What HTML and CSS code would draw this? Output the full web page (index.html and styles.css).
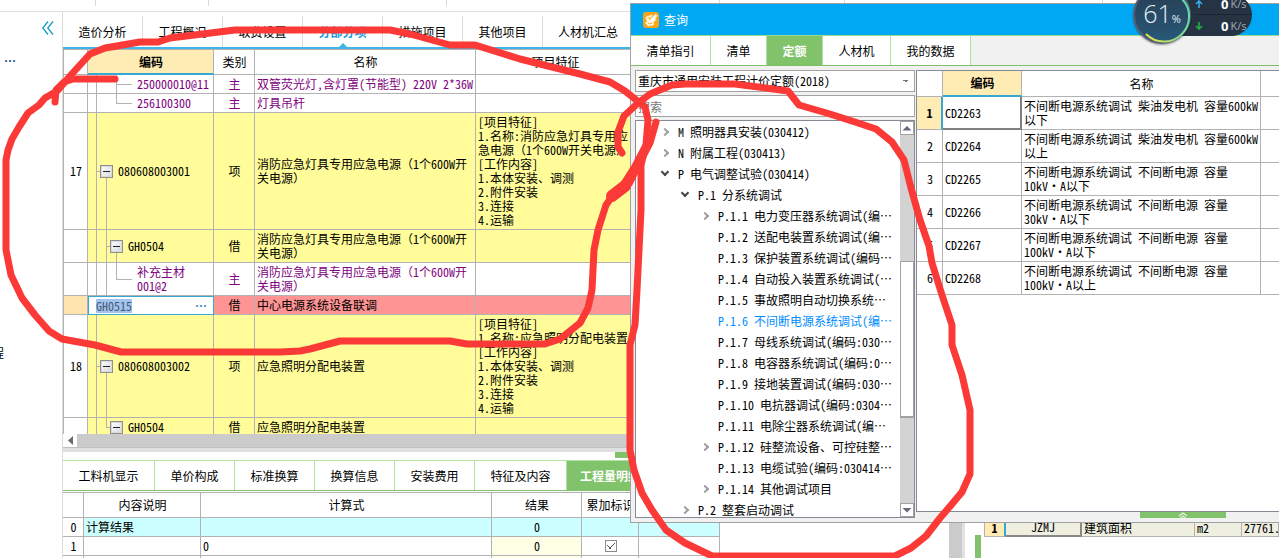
FILE: index.html
```html
<!DOCTYPE html>
<html lang="zh-CN">
<head>
<meta charset="utf-8">
<title>分部分项</title>
<link rel="stylesheet" href="styles.css">
</head>
<body>
<div class="app">
  <div class="ribbon"><i class="w1"></i><i class="w2"></i><i class="w3"></i><i class="w4"></i><i class="w5"></i><i class="w6"></i></div>
  <div class="body">
    <aside class="side">
      <button class="fold" aria-label="收起"><svg width="12" height="14" viewBox="0 0 12 14" fill="none" stroke="#189bc9" stroke-width="1.3"><path d="M6 .5 .8 7 6 13.500M11 .5 5.800 7 11 13.500"/></svg></button>
      <span class="side-more">、…</span>
      <span class="side-item">程</span>
    </aside>
    <main class="work">
      <nav class="tabs">
        <button>造价分析</button><button>工程概况</button><button>取费设置</button><button class="on">分部分项</button><button>措施项目</button><button>其他项目</button><button>人材机汇总</button>
      </nav>
      <div class="gridwrap">
        <table class="grid bill">
          <colgroup><col class="c1"><col class="c2"><col class="c3"><col class="c4"><col class="c5"></colgroup>
          <thead><tr><th></th><th class="pick">编码</th><th>类别</th><th>名称</th><th>项目特征</th></tr></thead>
          <tbody>
            <tr class="mat"><td></td><td class="t-mid"><div class="leaf">250000010@11</div></td><td class="c">主</td><td>双管荧光灯,含灯罩(节能型) 220V 2*36W</td><td></td></tr>
            <tr class="mat"><td></td><td class="t-end"><div class="leaf">256100300</div></td><td class="c">主</td><td>灯具吊杆</td><td></td></tr>
            <tr class="item"><td class="c">17</td><td class="t-root"><div class="node"><button class="tog" aria-label="折叠"></button>080608003001</div></td><td class="c">项</td><td>消防应急灯具专用应急电源（1个600W开<br>关电源）</td><td>[项目特征]<br>1.名称:消防应急灯具专用应<br>急电源（1个600W开关电源）<br>[工作内容]<br>1.本体安装、调测<br>2.附件安装<br>3.连接<br>4.运输</td></tr>
            <tr class="item"><td></td><td class="t-sub"><div class="node sub"><button class="tog" aria-label="折叠"></button>GH0504</div></td><td class="c">借</td><td>消防应急灯具专用应急电源（1个600W开<br>关电源）</td><td></td></tr>
            <tr class="mat"><td></td><td class="t-end2"><div class="leaf">补充主材<br>001@2</div></td><td class="c">主</td><td>消防应急灯具专用应急电源（1个600W开<br>关电源）</td><td></td></tr>
            <tr class="sel"><td></td><td class="edit"><div class="editor"><span class="mark">GH0515</span><button aria-label="更多">…</button></div></td><td class="c">借</td><td>中心电源系统设备联调</td><td></td></tr>
            <tr class="item"><td class="c">18</td><td class="t-root"><div class="node"><button class="tog" aria-label="折叠"></button>080608003002</div></td><td class="c">项</td><td>应急照明分配电装置</td><td>[项目特征]<br>1.名称:应急照明分配电装置<br>[工作内容]<br>1.本体安装、调测<br>2.附件安装<br>3.连接<br>4.运输</td></tr>
            <tr class="item"><td></td><td class="t-last"><div class="node sub"><button class="tog" aria-label="折叠"></button>GH0504</div></td><td class="c">借</td><td>应急照明分配电装置</td><td></td></tr>
          </tbody>
        </table>
      </div>
      <div class="hscroll"><button aria-label="向左"><svg width="12" height="13"><path d="M9 2v9L4 6.500z" fill="#666a73"/></svg></button></div>
      <div class="split"><i></i></div>
      <nav class="subtabs">
        <button class="wide">工料机显示</button><button>单价构成</button><button>标准换算</button><button>换算信息</button><button>安装费用</button><button class="wide">特征及内容</button><button class="on">工程量明细</button>
      </nav>
      <table class="grid calc">
        <colgroup><col class="d1"><col class="d2"><col class="d3"><col class="d4"><col class="d5"><col class="d6"></colgroup>
        <thead><tr><th></th><th>内容说明</th><th>计算式</th><th>结果</th><th>累加标识</th><th></th></tr></thead>
        <tbody>
          <tr class="sum"><td class="c">0</td><td>计算结果</td><td></td><td class="c">0</td><td></td><td></td></tr>
          <tr><td class="c">1</td><td></td><td>0</td><td class="c res">0</td><td class="c"><input type="checkbox" checked aria-label="累加标识"></td><td></td></tr>
          <tr><td></td><td></td><td></td><td class="res"></td><td></td><td></td></tr>
        </tbody>
      </table>
    </main>
    <div class="vbar"></div>
    <section class="right">
      <div class="grip"></div>
      <table class="vars"><colgroup><col class="v0"><col class="v1"><col class="v2"><col class="v3"><col></colgroup><tbody><tr><th>1</th><td class="code">JZMJ</td><td>建筑面积</td><td>m2</td><td>27761.</td></tr></tbody></table>
    </section>
  </div>
</div>

<section class="dialog" aria-label="查询">
  <header class="title">
    <svg width="16" height="16" viewBox="0 0 16 16"><rect width="16" height="16" rx="3" fill="#f9a51a"/><path d="M2.500 5 8 3l2 .5-4 4 1.500 2L12 6l1.500 1-3 3.500.5 2.500-6 1.500-3-4 2-1z" fill="#fff8e4"/><path d="m6.500 8.500 6-6.500 2 1.700-6 6-2.500.8z" fill="#fff"/><path d="m4.500 10.500 1.700 1.500 3.300-1M4.500 6.500l2.500-1" stroke="#f9a51a" fill="none"/></svg>
    <span>查询</span>
  </header>
  <nav class="dtabs"><button class="a">清单指引</button><button class="b">清单</button><button class="b on">定额</button><button class="d">人材机</button><button class="a">我的数据</button></nav>
  <div class="dbody">
    <div class="find">
      <select aria-label="定额库"><option>重庆市通用安装工程计价定额(2018)</option></select>
      <input type="text" placeholder="搜索" aria-label="搜索">
      <div class="treebox">
        <ul class="tree">
          <li class="l1 more">M 照明器具安装(030412)</li>
          <li class="l1 more">N 附属工程(030413)</li>
          <li class="l1 open">P 电气调整试验(030414)</li>
          <li class="l2 open">P.1 分系统调试</li>
          <li class="l3 more">P.1.1 电力变压器系统调试(编…</li>
          <li class="l3">P.1.2 送配电装置系统调试(编…</li>
          <li class="l3">P.1.3 保护装置系统调试(编码…</li>
          <li class="l3">P.1.4 自动投入装置系统调试(…</li>
          <li class="l3">P.1.5 事故照明自动切换系统…</li>
          <li class="l3 cur">P.1.6 不间断电源系统调试(编…</li>
          <li class="l3">P.1.7 母线系统调试(编码:030…</li>
          <li class="l3">P.1.8 电容器系统调试(编码:0…</li>
          <li class="l3">P.1.9 接地装置调试(编码:030…</li>
          <li class="l3">P.1.10 电抗器调试(编码:0304…</li>
          <li class="l3">P.1.11 电除尘器系统调试(编…</li>
          <li class="l3 more">P.1.12 硅整流设备、可控硅整…</li>
          <li class="l3">P.1.13 电缆试验(编码:030414…</li>
          <li class="l3 more">P.1.14 其他调试项目</li>
          <li class="l2 more">P.2 整套启动调试</li>
        </ul>
        <div class="vscroll">
          <button aria-label="向上"><svg width="12" height="12"><path d="M1.500 8.500h9L6 4z" fill="#666a7c"/></svg></button>
          <i class="gap1"></i><i class="thumb"></i><i class="gap2"></i>
          <button aria-label="向下"><svg width="12" height="12"><path d="M1.500 4h9L6 8.500z" fill="#666a7c"/></svg></button>
        </div>
      </div>
    </div>
    <div class="result">
      <div class="rbox">
        <table class="grid quota">
          <colgroup><col class="q1"><col class="q2"><col class="q3"><col></colgroup>
          <thead><tr><th></th><th class="pick">编码</th><th>名称</th><th></th></tr></thead>
          <tbody>
            <tr class="first"><td class="c">1</td><td>CD2263</td><td>不间断电源系统调试 柴油发电机 容量600kW<br>以下</td><td></td></tr>
            <tr><td class="c">2</td><td>CD2264</td><td>不间断电源系统调试 柴油发电机 容量600kW<br>以上</td><td></td></tr>
            <tr><td class="c">3</td><td>CD2265</td><td>不间断电源系统调试 不间断电源 容量<br>10kV·A以下</td><td></td></tr>
            <tr><td class="c">4</td><td>CD2266</td><td>不间断电源系统调试 不间断电源 容量<br>30kV·A以下</td><td></td></tr>
            <tr><td class="c">5</td><td>CD2267</td><td>不间断电源系统调试 不间断电源 容量<br>100kV·A以下</td><td></td></tr>
            <tr><td class="c">6</td><td>CD2268</td><td>不间断电源系统调试 不间断电源 容量<br>100kV·A以上</td><td></td></tr>
          </tbody>
        </table>
      </div>
      <button class="pull" aria-label="展开"><svg width="10" height="6" viewBox="0 0 10 6" fill="none" stroke="#e6f5df" stroke-width="1.300"><path d="m1 4 4-3 4 3M2.500 6 5 4l2.500 2"/></svg></button>
    </div>
  </div>
</section>

<div class="meter">
  <div class="net">
    <div><svg width="8" height="8" viewBox="0 0 8 8" fill="none" stroke="#3aa9ee" stroke-width="1.600"><path d="M4 8V1M1 4l3-3 3 3"/></svg><b>0</b><span>K/s</span></div>
    <div><svg width="8" height="8" viewBox="0 0 8 8" fill="none" stroke="#23b045" stroke-width="1.600"><path d="M4 0v7M1 4l3 3 3-3"/></svg><b>0</b><span>K/s</span></div>
  </div>
  <div class="ball">
    <svg class="arc" width="58" height="58" viewBox="0 0 58 58" fill="none" stroke-width="2"><defs><linearGradient id="arc" x1="1" y1="0" x2="0" y2="1"><stop offset="0" stop-color="#55dfb4"/><stop offset=".55" stop-color="#83d98d"/><stop offset="1" stop-color="#f3e04c"/></linearGradient></defs><path d="M49 13A25 25 0 0 1 13 48" stroke="url(#arc)"/></svg>
    <strong>61</strong><small>%</small>
  </div>
</div>

<svg class="ink" width="1279" height="558" viewBox="0 0 1279 558" fill="none" stroke="#fb3a37" stroke-width="7" stroke-linecap="round" stroke-linejoin="round">
  <path d="M115 79H73L64 82 56 90 55 102M57 91 45 98 39 105 28 113 19 127 12 139 8 150 6 160V250L11 275 22 298 35 315 49 331 62 339 95 345 121 352H280L300 351 310 349 340 341H450L467 344H545L560 339 580 323 588 308 592 290 594 250 598 230 606 205 613 195 620 189 629 184 638 166 650 143 656 122"/>
  <path d="M58 90 70 76 90 54 105 48 140 42H158L170 38 235 30H390L410 34 450 45H475L520 59 580 74 610 82 625 91 645 107 648 120 646 145 634 168 618 193"/>
  <path d="M622 153 618 147 618 132 624 116 637 104 650 94 672 85 685 84H735L788 91 799 105 830 114 855 122 876 129 892 142 904 160 911 188 920 220 929 246 932 263 942 295 952 325V345L962 375 970 410V474L962 492 952 504 940 518 926 536 911 548 895 556H712L685 543 666 530 652 510 642 493 634 470 630 450V345L635 325 637 290 641 210V165L646 145"/>
  <path d="m612 196 13-10" stroke-width="12"/>
</svg>
</body>
</html>
```
FILE: styles.css
```css
*, *::before, *::after { box-sizing: border-box; }
html, body { height: 100%; }
body {
  margin: 0;
  position: relative;
  overflow: hidden;
  background: #fff;
  color: #000;
  font: 12px/14px "Noto Sans Mono CJK SC", "Noto Sans CJK SC", sans-serif;
}
button, input, select { font: inherit; color: inherit; margin: 0; padding: 0; border: 0; background: none; border-radius: 0; }
.app { height: 100%; display: flex; flex-direction: column; }
.ribbon { display: flex; flex: none; height: 12px; border-bottom: 1px solid #e0e0e0; }
.ribbon i { height: 6px; border-right: 1px solid #d8d8d8; }
.w1 { width: 96px; } .w2 { width: 113px; } .w3 { width: 238px; } .w4 { width: 273px; } .w5 { width: 125px; } .w6 { width: 258px; }
.body { flex: 1; min-height: 0; display: flex; }

.side { flex: none; width: 63px; border-right: 1px solid #dcdcdc; display: flex; flex-direction: column; overflow: hidden; }
.fold { align-self: flex-end; margin: 8px 8px 0 0; height: 16px; line-height: 0; }
.side-more { margin: 18px 0 0 -8px; color: #1d4e91; font-weight: bold; }
.side-item { margin: 278px 0 0 -8px; }

.work { flex: 1; min-width: 0; display: flex; flex-direction: column; overflow: hidden; }
.tabs { flex: none; display: flex; height: 37px; padding-top: 4px; border-bottom: 2px solid #3fb4e6; }
.tabs button { position: relative; width: 80px; border-right: 1px solid #dcdcdc; }
.tabs button:last-child { width: 90px; border: 0; }
.tabs .on { color: #189de0; font-weight: bold; }
.tabs .on::after { content: ""; position: absolute; left: 36px; bottom: 0; border: 4px solid transparent; border-top: 0; border-bottom-color: #3fb4e6; }

.grid { border-collapse: separate; border-spacing: 0; table-layout: fixed; }
.grid th, .grid td { border: solid #b2b2b2; border-width: 0 1px 1px 0; padding: 2px 1px 2px 2px; white-space: nowrap; overflow: hidden; text-align: left; font-weight: normal; }
.grid th { text-align: center; height: 25px; }
.grid .c { text-align: center; }
.grid th.pick { background: #ffebb4; font-weight: bold; border-bottom: 2px solid #36a8d4; }

.gridwrap { flex: none; height: 385px; overflow: hidden; border-top: 1px solid #b2b2b2; border-left: 1px solid #b2b2b2; }
.bill { width: 571px; }
.c1 { width: 24px; } .c2 { width: 126px; } .c3 { width: 41px; } .c4 { width: 221px; } .c5 { width: 159px; }
.mat { color: #800080; }
.item td { background-color: #fffc99; }
.item td:first-child { background: #fff; }
.sel td { background: #ff9494; }
.sel td:first-child { background: #ffe4b0; }
.leaf { padding-left: 47px; }
.node { display: flex; align-items: center; gap: 5px; padding-left: 10px; }
.node.sub { padding-left: 20px; }
.tog { flex: none; width: 13px; height: 13px; border: 1px solid #8f8f8f; outline: 1px solid #d9d9d9; outline-offset: -2px; background: linear-gradient(#222, #222) center / 7px 1px no-repeat, linear-gradient(135deg, #fff, #d4d7dc); }
.bill td[class^="t-"] { --g: linear-gradient(#b2b2b2, #b2b2b2); background-repeat: no-repeat; }
.bill td.t-mid { background-image: var(--g), var(--g), var(--g); background-size: 1px 100%, 1px 100%, 16px 1px; background-position: 8px 0, 28px 0, 28px 50%; }
.bill td.t-end { background-image: var(--g), var(--g), var(--g); background-size: 1px 100%, 1px 50%, 16px 1px; background-position: 8px 0, 28px 0, 28px 50%; }
.bill td.t-end2 { background-image: var(--g), var(--g), var(--g), var(--g); background-size: 1px 100%, 1px 100%, 1px 50%, 16px 1px; background-position: 8px 0, 18px 0, 28px 0, 28px 50%; }
.bill td.t-root { background-image: var(--g), var(--g), var(--g); background-size: 1px 100%, 1px 50%, 4px 1px; background-position: 8px 0, 18px 100%, 8px 50%; }
.bill td.t-sub { background-image: var(--g), var(--g), var(--g), var(--g); background-size: 1px 100%, 1px 100%, 1px 50%, 4px 1px; background-position: 8px 0, 18px 0, 28px 100%, 18px 50%; }
.bill td.t-last { background-image: var(--g), var(--g), var(--g); background-size: 1px 100%, 1px 50%, 4px 1px; background-position: 8px 0, 18px 0, 18px 50%; }
.bill td.edit { padding: 0; border: 0; background: #fff; }
.editor { display: flex; justify-content: space-between; align-items: center; height: 19px; padding: 0 6px 0 7px; border: 1px solid #36a8d4; }
.mark { background: #a3c3ef; color: #465a73; }
.editor button { color: #3b84c4; font-weight: bold; }

.hscroll { flex: none; height: 14px; background: #cbcbcb; border-bottom: 1px solid #c0c0c0; }
.hscroll button { display: block; width: 14px; height: 13px; background: #fff; line-height: 0; }
.split { flex: none; height: 12px; background: linear-gradient(#e0e0e0 4px, #fff 4px); display: flex; align-items: flex-end; }
.split i { width: 86px; height: 6px; margin: 0 0 2px 552px; background: #80c36a; }
.subtabs { flex: none; display: flex; height: 31px; border-top: 1px solid #b1e29f; border-bottom: 1px solid #7cc067; }
.subtabs button { width: 80px; border-right: 1px solid #b1e29f; }
.subtabs .wide { width: 92px; }
.subtabs .on { width: 86px; background: #80c36a; color: #fff; font-weight: bold; border: 0; }
.calc { width: 657px; margin-top: 1px; border-top: 1px solid #b2b2b2; }
.d1 { width: 21px; } .d2 { width: 117px; } .d3 { width: 291px; } .d4 { width: 90px; } .d5 { width: 57px; } .d6 { width: 81px; }
.calc td { height: 19px; }
.sum td { background: #ccffff; }
.sum td:first-child { background: #fff; }
.calc .res { background: #ffffe6; }
.calc input { appearance: none; display: block; width: 12px; height: 12px; margin: 0 auto; border: 1px solid #8c8c8c; background: linear-gradient(45deg, transparent 42%, #555 42% 60%, transparent 60%) 1px 4px / 4px 4px no-repeat, linear-gradient(-45deg, transparent 42%, #555 42% 58%, transparent 58%) 3px 2px / 6px 6px no-repeat; }

.vbar { flex: none; width: 16px; background: #cbcbcb; border-right: 3px solid #e2e2e2; }
.right { flex: none; width: 314px; display: flex; align-items: flex-end; }
.grip { flex: none; width: 6px; height: 23px; margin: 0 3px 0 10px; background: #80c36a; }
.vars { flex: 1; width: 100%; min-width: 0; margin-bottom: 21px; border-collapse: separate; border-spacing: 0; table-layout: fixed; border-left: 1px solid #b2b2b2; }
.vars td, .vars th { height: 19px; padding: 1px 2px; border: solid #b2b2b2; border-width: 1px 1px 1px 0; background: #efefe0; white-space: nowrap; }
.vars th { background: #ffebb4; border-right: 2px solid #36a8d4; }
.vars td.code { text-align: center; border-right: 2px solid #888; border-bottom: 2px solid #888; }
.v0 { width: 21px; } .v1 { width: 76px; } .v2 { width: 113px; } .v3 { width: 47px; }

.dialog { position: absolute; left: 630px; right: 0; top: 3px; height: 520px; display: flex; flex-direction: column; background: #f1f1f1; border: 1px solid #a2a2a2; border-right: 0; }
.title { flex: none; height: 31px; display: flex; align-items: center; gap: 5px; padding-left: 12px; background: #00a8f3; color: #fff; }
.dtabs { flex: none; display: flex; height: 31px; border-top: 1px solid #9fda8c; border-bottom: 1px solid #7cc067; }
.dtabs button { background: #fff; border-right: 1px solid #b1e29f; }
.dtabs .a { width: 80px; } .dtabs .b { width: 56px; } .dtabs .d { width: 68px; }
.dtabs .on { background: #80c36a; color: #fff; font-weight: bold; }
.dbody { flex: 1; min-height: 0; display: flex; gap: 1px; padding: 4px 0 4px 4px; }
.find { flex: none; width: 280px; display: flex; flex-direction: column; gap: 3px; }
.find select, .find > input { flex: none; height: 22px; border: 1px solid #a2a2a2; background: #fff; padding: 0 2px; }
.find select { appearance: none; background: #fff linear-gradient(45deg, transparent 50%, #6b7680 50%) right 8px center / 3px 3px no-repeat; background: linear-gradient(to bottom left, #6b7680 50%, transparent 50%) right 8px center / 3px 3px no-repeat, linear-gradient(to bottom right, #6b7680 50%, transparent 50%) right 5px center / 3px 3px no-repeat, #fff; }
.find > input::placeholder { color: #777; opacity: 1; }
.treebox { flex: 1; min-height: 0; display: flex; border: 1px solid #858a94; background: #fff; }
.tree { flex: 1; min-width: 0; margin: 0; padding: 0; list-style: none; overflow: hidden; white-space: nowrap; }
.tree li { display: flex; align-items: center; height: 21px; }
.tree li::before { content: ""; width: 6px; height: 6px; margin: 0 10px 0 0; flex: none; }
.tree .more::before { border: solid #a0a0a0; border-width: 2px 2px 0 0; transform: rotate(45deg); }
.tree .open::before { border: solid #444; border-width: 0 2px 2px 0; transform: rotate(45deg); margin-bottom: 4px; }
.l1 { padding-left: 26px; } .l2 { padding-left: 46px; } .l3 { padding-left: 66px; }
.cur { color: #008cff; }
.vscroll { flex: none; width: 14px; display: flex; flex-direction: column; background: #d3d3d3; }
.vscroll button { flex: none; height: 14px; border: 1px solid #a2a2a2; background: #fff; line-height: 0; }
.gap1 { flex: 126; } .thumb { flex: 155; background: #fff; border: 1px solid #a2a2a2; border-bottom-width: 2px; } .gap2 { flex: 85; }
.result { flex: 1; min-width: 0; display: flex; flex-direction: column; }
.rbox { flex: 1; min-height: 0; background: #fff; border: solid #858a94; border-width: 1px 0 1px 1px; overflow: hidden; }
.quota { width: 100%; }
.q1 { width: 26px; } .q2 { width: 79px; } .q3 { width: 239px; }
.quota th { height: 26px; }
.quota th:last-child, .quota td:last-child { border-right: 0; }
.first td:nth-child(1) { background: #ffebb4; font-weight: bold; border-right: 2px solid #36a8d4; }
.first td:nth-child(2) { border-right: 2px solid #808080; border-bottom: 2px solid #808080; }
.pull { flex: none; width: 86px; height: 6px; margin-left: 224px; background: #80c36a; line-height: 0; }

.meter { position: absolute; left: 1133px; top: -14px; width: 119px; height: 58px; }
.net { position: absolute; left: 29px; right: 0; top: 8px; height: 42px; padding-left: 32px; border-radius: 0 21px 21px 0; background: #263343; color: #a2acb7; font: 11px/20px "Open Sans", sans-serif; overflow: hidden; }
.net div { display: flex; align-items: center; height: 21px; }
.net div:first-child { border-bottom: 1px solid #1b2632; }
.net b { margin-left: 18px; color: #fff; font-size: 13px; }
.net svg { margin-left: 1px; flex: none; }
.net span { margin-left: 2px; }
.ball { position: absolute; left: 0; top: 0; width: 58px; height: 58px; display: flex; align-items: baseline; justify-content: center; padding-top: 11px; border-radius: 50%; border: 2px solid #555e70; background: linear-gradient(#273d52, #285878); color: #e3f0f8; box-shadow: 0 1px 2px rgba(0, 0, 0, .4); }
.ball strong { font: 300 25px/28px "Open Sans", sans-serif; }
.ball small { font: 11px/14px "Open Sans", sans-serif; }
.arc { position: absolute; left: -2px; top: -2px; }
.ink { position: absolute; left: 0; top: 0; pointer-events: none; }
```
